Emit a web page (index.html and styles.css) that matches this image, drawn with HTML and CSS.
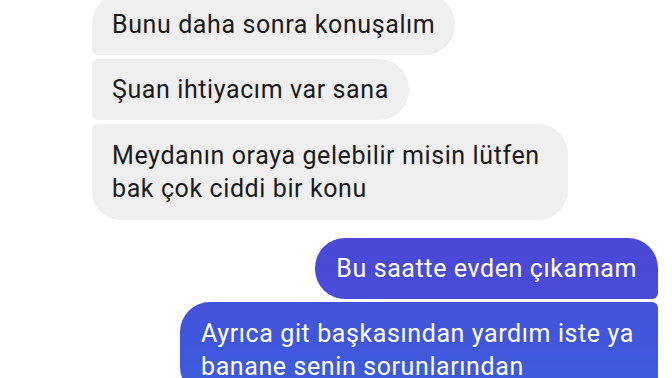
FILE: index.html
```html
<!DOCTYPE html>
<html lang="tr">
<head>
    <meta charset="UTF-8">
    <meta name="viewport" content="width=device-width, initial-scale=1.0">
    <title>Sohbet</title>
    <link rel="stylesheet" href="styles.css">
</head>
<body>
    <div class="chat">
        <div class="group incoming">
            <div class="bubble first">Bunu daha sonra konuşalım</div>
            <div class="bubble">Şuan ihtiyacım var sana</div>
            <div class="bubble last">Meydanın oraya gelebilir misin lütfen bak çok ciddi bir konu</div>
        </div>

        <div class="group outgoing">
            <div class="bubble first">Bu saatte evden çıkamam</div>
            <div class="bubble two">Ayrıca git başkasından yardım iste ya banane senin sorunlarından</div>
        </div>
    </div>
</body>
</html>
```

FILE: styles.css
```css
body {
    margin: 0;
    background-color: white;
    font-family: Roboto, "Noto Sans", Arial, sans-serif;
    overflow: hidden;
}
.chat {
    display: flex;
    flex-direction: column;
    gap: 18px;
    margin-top: -6px;
    padding: 0 14px 0 92px;
}
.group {
    display: flex;
    flex-direction: column;
    gap: 4px;
}
.incoming {
    align-items: flex-start;
}
.outgoing {
    align-items: flex-end;
    gap: 3px;
}
.bubble {
    max-width: 436px;
    padding: 14px 20px;
    font-size: 25px;
    line-height: 33px;
    letter-spacing: 0.6px;
}
.incoming .bubble {
    background-color: #efefef;
    color: #1a1a1a;
    border-radius: 6px 30px 30px 6px;
}
.incoming .bubble.first {
    border-top-left-radius: 30px;
}
.incoming .bubble.last {
    border-bottom-left-radius: 28px;
    padding-top: 15px;
    padding-bottom: 15px;
}
.outgoing .bubble {
    color: white;
    padding-left: 21px;
    padding-right: 21px;
    border-radius: 30px 6px 6px 30px;
}
.outgoing .bubble.first {
    background: linear-gradient(#4b47d7, #4a4cd8);
    border-top-right-radius: 30px;
}
.outgoing .bubble.two {
    background: linear-gradient(#4352dc, #3c5ddd);
    padding-top: 15px;
}
```
